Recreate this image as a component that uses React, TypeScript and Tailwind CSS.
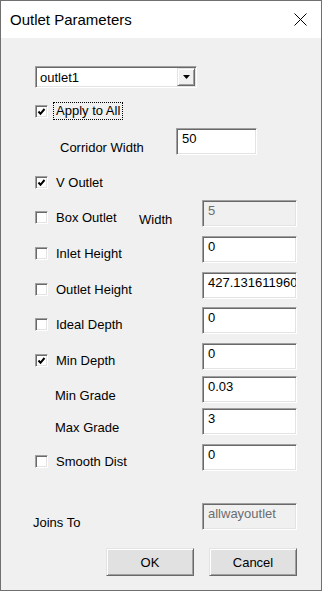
import clsx from "clsx";

const sunken =
  "border border-t-[#a0a0a0] border-l-[#a0a0a0] border-r-white border-b-white shadow-[inset_1px_1px_0_#696969,inset_-1px_-1px_0_#e3e3e3]";

const raised =
  "border border-t-[#e3e3e3] border-l-[#e3e3e3] border-r-[#696969] border-b-[#696969] shadow-[inset_1px_1px_0_#ffffff,inset_-1px_-1px_0_#a0a0a0]";

const CheckBox = ({ checked }: { checked?: boolean }) => (
  <div className={clsx("relative h-[13px] w-[13px] shrink-0 bg-white", sunken)}>
    {checked && (
      <svg
        className="absolute left-[-1px] top-[-1px]"
        width="13"
        height="13"
        viewBox="0 0 13 13"
      >
        <polyline
          points="3.5,6.5 5.5,8.8 9.5,4"
          fill="none"
          stroke="#000"
          strokeWidth="2"
        />
      </svg>
    )}
  </div>
);

const CheckLabel = ({
  label,
  checked,
  className,
}: {
  label: string;
  checked?: boolean;
  className?: string;
}) => (
  <div className={clsx("flex h-[14px] items-center gap-[8px]", className)}>
    <CheckBox checked={checked} />
    <span className="leading-[15px]">{label}</span>
  </div>
);

const TextBox = ({
  value,
  disabled,
  className,
}: {
  value: string;
  disabled?: boolean;
  className?: string;
}) => (
  <div
    className={clsx(
      "h-[27px] shrink-0 overflow-hidden whitespace-nowrap pl-[5px] pt-[2px] leading-[15px]",
      sunken,
      disabled ? "bg-[#f0f0f0] text-[#6d6d6d]" : "bg-white text-black",
      className ?? "w-[95px]"
    )}
  >
    {value}
  </div>
);

// row with a checkbox on the left and a text field at x=202
const CheckRow = ({
  label,
  value,
  checked,
  className,
}: {
  label: string;
  value: string;
  checked?: boolean;
  className?: string;
}) => (
  <div className={clsx("flex h-[27px] items-start", className)}>
    <div className="w-[167px]">
      <CheckLabel label={label} checked={checked} className="mt-[10px]" />
    </div>
    <TextBox value={value} />
  </div>
);

const LabelRow = ({
  label,
  value,
  className,
}: {
  label: string;
  value: string;
  className?: string;
}) => (
  <div className={clsx("flex h-[27px] items-start", className)}>
    <div className="w-[167px] pl-[20px] pt-[12px] leading-[15px]">{label}</div>
    <TextBox value={value} />
  </div>
);

const Button = ({ label }: { label: string }) => (
  <div
    className={clsx(
      "flex h-[28px] w-[88px] items-center justify-center bg-[#e1e1e1] leading-[15px]",
      raised
    )}
  >
    {label}
  </div>
);

export default function App() {
  return (
    <div className="h-[591px] w-[322px] border border-[#707070] bg-[#f0f0f0] font-['Liberation_Sans',Arial,sans-serif] text-[13px] text-black">
      {/* Title bar */}
      <div className="flex h-[37px] items-center justify-between bg-white pl-[9px] pr-[14px]">
        <span className="text-[15px] leading-[18px] text-black">
          Outlet Parameters
        </span>
        <svg width="13" height="13" viewBox="0 0 13 13">
          <path d="M0.5 0.5 L12.5 12.5 M12.5 0.5 L0.5 12.5" stroke="#000" strokeWidth="1" />
        </svg>
      </div>

      {/* Body */}
      <div className="flex flex-col pl-[34px]">
        {/* Combo */}
        <div
          className={clsx(
            "mt-[28px] flex h-[22px] w-[162px] items-center justify-between bg-white pl-[4px] pr-[1px]",
            sunken
          )}
        >
          <span className="leading-[15px]">outlet1</span>
          <div
            className={clsx(
              "flex h-[18px] w-[18px] items-center justify-center bg-[#f0f0f0]",
              raised
            )}
          >
            <svg width="7" height="4" viewBox="0 0 7 4">
              <path d="M0 0 H7 L3.5 4 Z" fill="#000" />
            </svg>
          </div>
        </div>

        {/* Apply to All */}
        <div className="mt-[14px] flex h-[18px] items-center gap-[5px]">
          <CheckBox checked />
          <span className="border border-dotted border-black px-[2px] leading-[16px]">
            Apply to All
          </span>
        </div>

        {/* Corridor Width */}
        <div className="mt-[8px] flex h-[27px] items-start">
          <div className="w-[141px] pl-[25px] pt-[12px] leading-[15px]">Corridor Width</div>
          <TextBox value="50" className="w-[81px]" />
        </div>

        <CheckLabel label="V Outlet" checked className="mt-[20px]" />

        {/* Box Outlet + Width */}
        <div className="mt-[11px] flex h-[27px] items-start">
          <div className="flex w-[167px] items-start">
            <CheckLabel label="Box Outlet" className="mt-[10px] w-[104px]" />
            <span className="pt-[12px] leading-[15px]">Width</span>
          </div>
          <TextBox value="5" disabled />
        </div>

        <CheckRow label="Inlet Height" value="0" className="mt-[9px]" />
        <CheckRow label="Outlet Height" value="427.131611960" className="mt-[9px]" />
        <CheckRow label="Ideal Depth" value="0" className="mt-[8px]" />
        <CheckRow label="Min Depth" value="0" checked className="mt-[9px]" />
        <LabelRow label="Min Grade" value="0.03" className="mt-[6px]" />
        <LabelRow label="Max Grade" value="3" className="mt-[5px]" />
        <CheckRow label="Smooth Dist" value="0" className="mt-[9px]" />

        {/* Joins To */}
        <div className="mt-[32px] flex h-[27px] items-start">
          <div className="-ml-[2px] w-[169px] pt-[12px] leading-[15px]">Joins To</div>
          <TextBox value="allwayoutlet" disabled />
        </div>

        {/* Buttons */}
        <div className="ml-[71px] mt-[18px] flex gap-[15px]">
          <Button label="OK" />
          <Button label="Cancel" />
        </div>
      </div>
    </div>
  );
}
